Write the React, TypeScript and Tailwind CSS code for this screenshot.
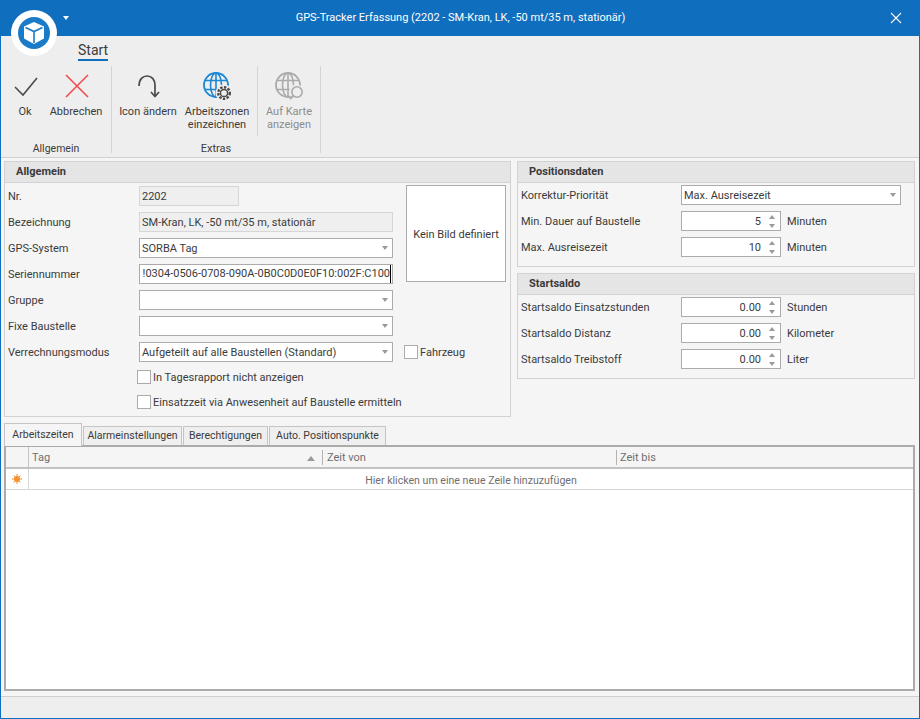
import { ReactNode } from 'react';

const font = "font-['Roboto',_'Noto_Sans',_sans-serif]";

function CheckIcon() {
  return (
    <svg width="26" height="26" viewBox="0 0 26 26" fill="none" stroke="#4a4a4a" strokeWidth="1.6">
      <path d="M3 14 L11 22 L25 5" />
    </svg>
  );
}

function CrossIcon() {
  return (
    <svg width="26" height="26" viewBox="0 0 26 26" fill="none" stroke="#ee4b50" strokeWidth="1.6">
      <path d="M3 2 L25 24 M25 2 L3 24" />
    </svg>
  );
}

function RotateIcon() {
  return (
    <svg width="26" height="26" viewBox="0 0 26 26" fill="none" stroke="#4a4a4a" strokeWidth="1.7">
      <path d="M4 13 C4 6 8 3 12 3 C17 3 20 7 20 12 L20 23" />
      <path d="M16 19 L20 23.5 L24 19" />
    </svg>
  );
}

function GlobeBase({ color }: { color: string }) {
  return (
    <g fill="none" stroke={color} strokeWidth="1.6" transform="translate(1 1)">
      <circle cx="13" cy="13" r="12" strokeWidth="1.8" />
      <ellipse cx="13" cy="13" rx="5.5" ry="12" />
      <path d="M13 1 V25 M2 8.5 H24 M2 17.5 H24" />
    </g>
  );
}

function GlobeGearIcon() {
  return (
    <svg width="30" height="30" viewBox="0 0 30 30">
      <GlobeBase color="#1c87d4" />
      <circle cx="22" cy="22" r="8.5" fill="#eeeeee" />
      <circle cx="22" cy="22" r="5.8" fill="none" stroke="#4a4a4a" strokeWidth="2.4" strokeDasharray="2.4 1.4" />
      <circle cx="22" cy="22" r="3.6" fill="none" stroke="#4a4a4a" strokeWidth="1.5" />
    </svg>
  );
}

function GlobeSearchIcon() {
  return (
    <svg width="30" height="30" viewBox="0 0 30 30">
      <GlobeBase color="#ababab" />
      <circle cx="22.5" cy="21" r="7.5" fill="#eeeeee" />
      <circle cx="23" cy="21" r="5.2" fill="#eeeeee" stroke="#ababab" strokeWidth="1.6" />
      <path d="M19.5 24.5 L16 28" stroke="#ababab" strokeWidth="2" />
    </svg>
  );
}

function Logo() {
  return (
    <div className="absolute left-[10px] top-[10px] flex h-[46px] w-[46px] items-center justify-center rounded-full bg-white">
      <svg width="32" height="32" viewBox="0 0 32 32">
        <circle cx="16" cy="16" r="16" fill="#1a7cc8" />
        <path d="M16 5 L26 9.5 V21.5 L16 27 L6 21.5 V9.5 Z" fill="#fff" />
        <path d="M7.5 10.5 L16 14.5 L24.5 10.5 M16 14.5 V26" fill="none" stroke="#1a7cc8" strokeWidth="1.6" />
      </svg>
    </div>
  );
}

function RibbonButton({
  icon,
  label,
  width,
  disabled,
}: {
  icon: ReactNode;
  label: string[];
  width: string;
  disabled?: boolean;
}) {
  return (
    <div className={`flex flex-col items-center ${width}`}>
      <div className="flex h-[36px] items-center justify-center">{icon}</div>
      <div className={`mt-[1px] text-center text-[11px] leading-[13px] ${disabled ? 'text-[#8c8c8c]' : 'text-[#3b3b3b]'}`}>
        {label.map((l) => (
          <div key={l} className="whitespace-nowrap">
            {l}
          </div>
        ))}
      </div>
    </div>
  );
}

function Ribbon() {
  return (
    <div className="h-[122px] shrink-0 border-b border-[#d0d0d0] bg-[#eeeeee]">
      <div className="h-[30px] pl-[77px]">
        <div className="w-fit pt-[5px] text-[14px] leading-[18px] text-[#3b3b3b]">
          Start
          <div className="h-[2px] bg-[#106ebe]" />
        </div>
      </div>
      <div className="flex h-[87px]">
        <div className="flex w-[111px] flex-col border-r border-[#d4d4d4]">
          <div className="flex h-[70px] shrink-0 pl-[3px] pt-[2px]">
            <RibbonButton icon={<CheckIcon />} label={['Ok']} width="w-[42px]" />
            <RibbonButton icon={<CrossIcon />} label={['Abbrechen']} width="w-[60px]" />
          </div>
          <div className="pt-[8px] text-center text-[10.5px] leading-[9px] text-[#3b3b3b]">Allgemein</div>
        </div>
        <div className="flex w-[209px] flex-col border-r border-[#d4d4d4]">
          <div className="flex h-[70px] shrink-0">
            <div className="flex w-[146px] border-r border-[#d4d4d4] pl-[3px] pt-[2px]">
              <RibbonButton icon={<RotateIcon />} label={['Icon ändern']} width="w-[66px]" />
              <RibbonButton icon={<GlobeGearIcon />} label={['Arbeitszonen', 'einzeichnen']} width="w-[72px]" />
            </div>
            <div className="w-[62px] pt-[2px]">
              <RibbonButton icon={<GlobeSearchIcon />} label={['Auf Karte', 'anzeigen']} width="w-[62px]" disabled />
            </div>
          </div>
          <div className="pt-[8px] text-center text-[11px] leading-[9px] text-[#3b3b3b]">Extras</div>
        </div>
      </div>
    </div>
  );
}

function Panel({ title, className, children }: { title: string; className: string; children: ReactNode }) {
  return (
    <div className={`border border-[#d2d2d2] ${className}`}>
      <div className="h-[21px] border-b border-[#d2d2d2] bg-[#e5e5e5] pl-[11px] text-[11px] font-bold leading-[20px] text-[#3a3a3a]">
        {title}
      </div>
      {children}
    </div>
  );
}

function Label({ text, width }: { text: string; width: string }) {
  return <div className={`${width} shrink-0 whitespace-nowrap pt-[2px] text-[11px] text-[#3b3b3b]`}>{text}</div>;
}

function ReadOnlyBox({ text, width }: { text: string; width: string }) {
  return (
    <div className={`flex h-[20px] ${width} items-center overflow-hidden border border-[#d6d6d6] bg-[#efefef] pl-[2px] pt-[2px] text-[11px] text-[#3b3b3b]`}>
      {text}
    </div>
  );
}

function Caret() {
  return <div className="h-0 w-0 border-x-[3.5px] border-t-[4px] border-x-transparent border-t-[#9a9a9a]" />;
}

function ComboBox({ text, width }: { text: string; width: string }) {
  return (
    <div className={`flex h-[20px] ${width} items-center justify-between border border-[#ababab] bg-white pl-[2px] pr-[4px] text-[11px] text-[#3b3b3b]`}>
      <span className="whitespace-nowrap pt-[2px]">{text}</span>
      <Caret />
    </div>
  );
}

function SpinBox({ value }: { value: string }) {
  return (
    <div className="flex h-[20px] w-[100px] items-center justify-end border border-[#ababab] bg-white text-[11px] text-[#3b3b3b]">
      <span className="pr-[3px] pt-[2px]">{value}</span>
      <div className="flex w-[16px] flex-col items-center gap-[5px]">
        <div className="h-0 w-0 border-x-[3.5px] border-b-[4px] border-x-transparent border-b-[#9a9a9a]" />
        <Caret />
      </div>
    </div>
  );
}

function CheckBox({ label }: { label: string }) {
  return (
    <div className="flex h-[14px] items-start gap-[2px] text-[11px] leading-[14px] text-[#3b3b3b]">
      <div className="h-[14px] w-[14px] shrink-0 border border-[#ababab] bg-white" />
      <span className="whitespace-nowrap pt-[1px]">{label}</span>
    </div>
  );
}

function FormRow({ label, children }: { label: string; children: ReactNode }) {
  return (
    <div className="flex h-[20px] items-center">
      <Label text={label} width="w-[131px]" />
      {children}
    </div>
  );
}

function AllgemeinPanel() {
  return (
    <Panel title="Allgemein" className="h-[256px] w-[507px] shrink-0">
      <div className="flex pl-[3px] pt-[3px]">
        <div className="flex w-[392px] shrink-0 flex-col gap-[6px]">
          <FormRow label="Nr.">
            <ReadOnlyBox text="2202" width="w-[100px]" />
          </FormRow>
          <FormRow label="Bezeichnung">
            <ReadOnlyBox text="SM-Kran, LK, -50 mt/35 m, stationär" width="w-[254px]" />
          </FormRow>
          <FormRow label="GPS-System">
            <ComboBox text="SORBA Tag" width="w-[254px]" />
          </FormRow>
          <FormRow label="Seriennummer">
            <div className="flex h-[20px] w-[254px] items-center justify-end overflow-hidden whitespace-nowrap border border-[#ababab] bg-white pr-[1px] text-[11px] text-[#3b3b3b]">
              <span className="shrink-0 border-r border-black pt-[1px]">!0304-0506-0708-090A-0B0C0D0E0F10:002F:C100</span>
            </div>
          </FormRow>
          <FormRow label="Gruppe">
            <ComboBox text="" width="w-[254px]" />
          </FormRow>
          <FormRow label="Fixe Baustelle">
            <ComboBox text="" width="w-[254px]" />
          </FormRow>
          <FormRow label="Verrechnungsmodus">
            <ComboBox text="Aufgeteilt auf alle Baustellen (Standard)" width="w-[254px]" />
          </FormRow>
          <div className="mt-[2px] flex flex-col gap-[11px] pl-[129px]">
            <CheckBox label="In Tagesrapport nicht anzeigen" />
            <CheckBox label="Einsatzzeit via Anwesenheit auf Baustelle ermitteln" />
          </div>
        </div>
        <div className="-mt-[1px] flex flex-col pl-[4px]">
          <div className="ml-[2px] flex h-[97px] w-[100px] items-center justify-center border border-[#ababab] bg-white pt-[3px] text-[11px] text-[#3b3b3b]">
            Kein Bild definiert
          </div>
          <div className="mt-[63px]">
            <CheckBox label="Fahrzeug" />
          </div>
        </div>
      </div>
    </Panel>
  );
}

function RightRow({ label, unit, children }: { label: string; unit?: string; children: ReactNode }) {
  return (
    <div className="flex h-[20px] items-center">
      <Label text={label} width="w-[160px]" />
      {children}
      {unit && <span className="pl-[6px] pt-[2px] text-[11px] text-[#3b3b3b]">{unit}</span>}
    </div>
  );
}

function RightPanels() {
  return (
    <div className="flex w-[398px] shrink-0 flex-col gap-[6px]">
      <Panel title="Positionsdaten" className="h-[106px]">
        <div className="flex flex-col gap-[6px] pl-[3px] pt-[2px]">
          <RightRow label="Korrektur-Priorität">
            <ComboBox text="Max. Ausreisezeit" width="w-[220px]" />
          </RightRow>
          <RightRow label="Min. Dauer auf Baustelle" unit="Minuten">
            <SpinBox value="5" />
          </RightRow>
          <RightRow label="Max. Ausreisezeit" unit="Minuten">
            <SpinBox value="10" />
          </RightRow>
        </div>
      </Panel>
      <Panel title="Startsaldo" className="h-[106px]">
        <div className="flex flex-col gap-[6px] pl-[3px] pt-[2px]">
          <RightRow label="Startsaldo Einsatzstunden" unit="Stunden">
            <SpinBox value="0.00" />
          </RightRow>
          <RightRow label="Startsaldo Distanz" unit="Kilometer">
            <SpinBox value="0.00" />
          </RightRow>
          <RightRow label="Startsaldo Treibstoff" unit="Liter">
            <SpinBox value="0.00" />
          </RightRow>
        </div>
      </Panel>
    </div>
  );
}

function Tabs() {
  const others = [
    { label: 'Alarmeinstellungen', width: 'w-[99px]' },
    { label: 'Berechtigungen', width: 'w-[85px]' },
    { label: 'Auto. Positionspunkte', width: 'w-[117px]' },
  ];
  return (
    <div className="flex h-[22px] items-end gap-[1px] text-[10.5px] text-[#3b3b3b]">
      <div className="relative z-10 -mb-[1px] flex h-[23px] w-[78px] items-center justify-center border border-b-0 border-[#c4c4c4] bg-[#f5f5f5]">
        Arbeitszeiten
      </div>
      {others.map((t) => (
        <div key={t.label} className={`flex h-[19px] ${t.width} items-center justify-center border border-b-0 border-[#c4c4c4] bg-[#efefef]`}>
          {t.label}
        </div>
      ))}
    </div>
  );
}

function Grid() {
  return (
    <div className="flex h-[246px] flex-col border-2 border-[#ababab] bg-white text-[11px] text-[#6f6f6f]">
      <div className="flex h-[22px] shrink-0 items-center border-b-2 border-[#c2c2c2] bg-[#f5f5f5]">
        <div className="h-full w-[23px] shrink-0 border-r border-[#c2c2c2]" />
        <div className="flex h-full w-[293px] shrink-0 items-center justify-between pl-[3px] pr-[7px] pt-[2px]">
          <span>Tag</span>
          <div className="h-0 w-0 border-x-[4.5px] border-b-[5px] border-x-transparent border-b-[#9a9a9a]" />
        </div>
        <div className="h-[15px] w-px shrink-0 bg-[#b4b4b4]" />
        <div className="flex h-full w-[293px] shrink-0 items-center pl-[4px] pt-[2px]">Zeit von</div>
        <div className="h-[15px] w-px shrink-0 bg-[#b4b4b4]" />
        <div className="pl-[3px] pt-[2px]">Zeit bis</div>
      </div>
      <div className="flex h-[21px] shrink-0 items-center border-b border-[#d6d6d6]">
        <div className="flex h-full w-[23px] shrink-0 items-center justify-center border-r border-[#d6d6d6]">
          <svg width="10" height="10" viewBox="0 0 10 10" stroke="#f2932f" strokeWidth="1">
            <circle cx="5" cy="5" r="3" fill="#f2932f" stroke="none" />
            <path d="M5 0 V10 M0 5 H10 M1.5 1.5 L8.5 8.5 M8.5 1.5 L1.5 8.5" />
          </svg>
        </div>
        <div className="flex-1 pt-[3px] text-center text-[10.6px]">Hier klicken um eine neue Zeile hinzuzufügen</div>
      </div>
    </div>
  );
}

export default function App() {
  return (
    <div className={`relative flex h-[719px] w-[920px] flex-col overflow-hidden border-x border-b border-[#106ebe] bg-[#f5f5f5] ${font}`}>
      <div className="relative flex h-[36px] shrink-0 items-center justify-center bg-[#106ebe] pl-[1px] text-[11px] text-white">
        GPS-Tracker Erfassung (2202 - SM-Kran, LK, -50 mt/35 m, stationär)
        <div className="absolute left-[62px] top-[16px] h-0 w-0 border-x-[3.5px] border-t-[4px] border-x-transparent border-t-white" />
        <svg className="absolute right-[17px] top-[12px]" width="12" height="12" viewBox="0 0 12 12" stroke="#fff" strokeWidth="1.1">
          <path d="M1 1 L11 11 M11 1 L1 11" />
        </svg>
      </div>
      <Logo />
      <Ribbon />
      <div className="flex-1 pl-[3px] pr-[4px] pt-[3px]">
        <div className="flex gap-[6px]">
          <AllgemeinPanel />
          <RightPanels />
        </div>
        <div className="mt-[6px]">
          <Tabs />
          <Grid />
        </div>
      </div>
      <div className="h-[22px] shrink-0 border-t border-[#cfcfcf] bg-[#eeeeee]" />
    </div>
  );
}
